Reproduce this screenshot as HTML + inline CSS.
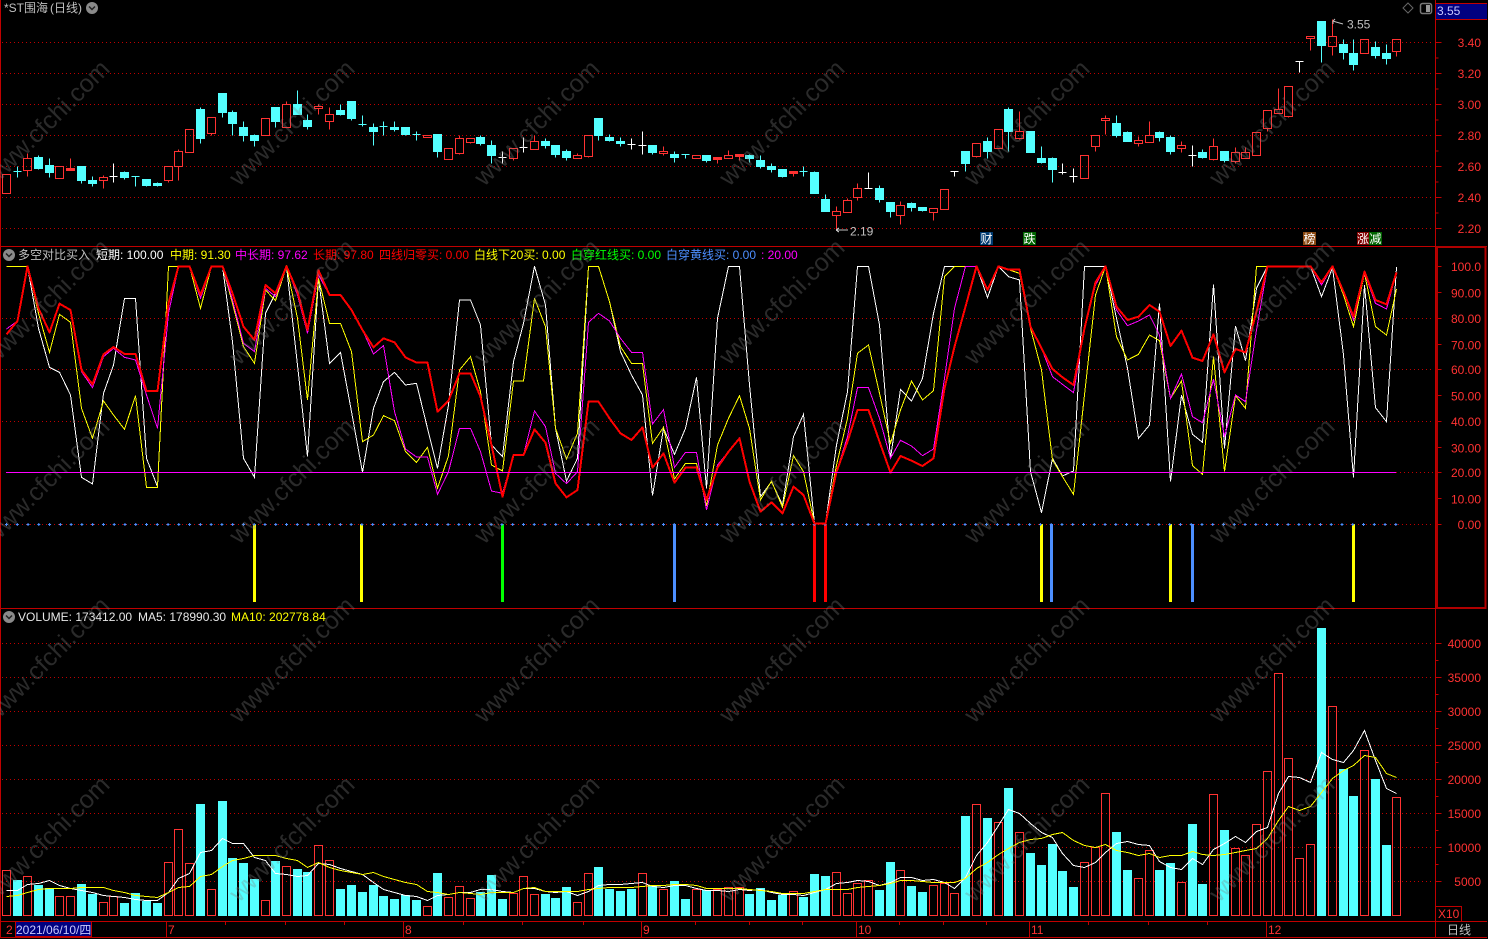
<!DOCTYPE html>
<html><head><meta charset="utf-8"><title>*ST围海</title>
<style>
html,body{margin:0;padding:0;background:#000;width:1488px;height:939px;overflow:hidden}
svg{display:block;position:absolute;left:0;top:0}
text{font-family:"Liberation Sans","Noto Sans CJK SC",sans-serif;font-size:12px;white-space:pre}
.l text{fill:#ff3232;text-anchor:end}
.wm text{font-size:25px;fill:rgba(128,128,128,.33);text-anchor:middle}
</style></head><body>
<svg width="1488" height="939" viewBox="0 0 1488 939" xmlns="http://www.w3.org/2000/svg">
<rect width="1488" height="939" fill="#000"/>

<!-- grid -->
<g stroke="#c00000" stroke-dasharray="1 3" shape-rendering="crispEdges">
<path d="M2 42.5H1434M2 73.5H1434M2 104.5H1434M2 135.5H1434M2 166.5H1434M2 197.5H1434M2 228.5H1434"/>
<path d="M2 318.5H1434M2 369.5H1434M2 421.5H1434M1396 472.5H1434M2 524.5H1434"/>
<path d="M2 643.5H1434M2 677.5H1434M2 711.5H1434M2 745.5H1434M2 779.5H1434M2 813.5H1434M2 847.5H1434M2 881.5H1434"/>
</g>

<!-- candles -->
<g transform="translate(.5 .5)" shape-rendering="crispEdges">
<path fill="#54ffff" stroke="#54ffff" d="M13 171h8M17 166V177M34 157h8v11h-8zM38 155V169M45 165h8v7h-8zM49 158V177M77 166h8v14h-8zM81 180V183M88 180h8v3h-8zM92 176V186M120 172h8v5h-8zM124 171V179M131 176h8M135 176V186M142 179h8v6h-8zM146 185V186M153 183h8v2h-8zM157 182V186M196 109h8v29h-8zM200 107V143M218 93h8v19h-8zM222 112V117M228 112h8v11h-8zM232 110V135M239 127h8v8h-8zM243 121V141M250 135h8v5h-8zM254 134V146M271 107h8v14h-8zM275 121V127M293 104h8v10h-8zM297 90V104M303 120h8v6h-8zM307 114V129M336 110h8v4h-8zM340 104V115M347 101h8v17h-8zM351 118V120M358 124h8M362 115V126M369 127h8v4h-8zM373 123V145M379 126h8M383 121V135M390 127h8v2h-8zM394 121V131M401 127h8v7h-8zM405 134V135M412 134h8M416 131V140M433 134h8v17h-8zM437 151V157M476 137h8v6h-8zM480 135V145M487 145h8v10h-8zM491 140V163M541 141h8v4h-8zM545 138V148M551 145h8v9h-8zM555 154V157M562 151h8v6h-8zM566 149V160M594 118h8v17h-8zM598 135V140M605 137h8v3h-8zM609 134V141M616 141h8v2h-8zM620 137V146M648 145h8v7h-8zM652 152V154M670 154h8v3h-8zM674 151V162M681 154h8M685 154V158M702 155h8v5h-8zM706 160V162M745 155h8v3h-8zM749 154V162M756 160h8v6h-8zM760 155V168M767 166h8v3h-8zM771 163V172M778 169h8v7h-8zM782 176V177M799 171h8M803 166V176M810 172h8v21h-8zM814 171V172M821 199h8v12h-8zM825 194V199M875 188h8v11h-8zM879 185V202M886 202h8v9h-8zM890 211V217M907 203h8v4h-8zM911 202V211M918 207h8v3h-8zM922 210V211M961 151h8v12h-8zM965 163V171M983 141h8v10h-8zM987 137V158M1004 109h8v22h-8zM1008 107V151M1026 131h8v21h-8zM1037 158h8v4h-8zM1041 146V163M1048 158h8v11h-8zM1052 157V182M1112 123h8v12h-8zM1116 115V137M1123 132h8v9h-8zM1127 131V132M1155 132h8v5h-8zM1159 131V141M1166 137h8v14h-8zM1170 135V154M1198 152h8v5h-8zM1202 149V158M1220 151h8v9h-8zM1224 160V162M1317 21h8v24h-8zM1321 45V62M1339 44h8v8h-8zM1343 39V59M1349 53h8v11h-8zM1353 39V70M1371 47h8v8h-8zM1375 41V58M1382 53h8v5h-8zM1386 44V64"/>
<path fill="none" stroke="#ff3232" d="M2 174h8v19h-8zM23 158h8v12h-8zM27 153V158M27 170V176M55 166h8v12h-8zM66 168h8v2h-8zM70 158V168M99 177h8v3h-8zM103 175V177M103 180V188M164 166h8v14h-8zM168 180V182M174 151h8v15h-8zM178 149V151M178 166V180M185 129h8v23h-8zM207 117h8v16h-8zM211 133V135M261 118h8v17h-8zM282 104h8v23h-8zM286 101V104M314 106h8v2h-8zM318 104V106M318 108V114M325 114h8v7h-8zM329 107V114M329 121V129M423 135h8v2h-8zM444 148h8v11h-8zM455 138h8v15h-8zM459 135V138M459 153V154M466 138h8v4h-8zM470 142V143M509 148h8v10h-8zM513 158V160M530 141h8v8h-8zM534 135V141M573 155h8v3h-8zM577 153V155M584 135h8v21h-8zM588 156V157M659 151h8v2h-8zM663 146V151M663 153V155M692 155h8v3h-8zM713 157h8v2h-8zM717 159V163M724 155h8v3h-8zM728 150V155M735 154h8v2h-8zM739 156V160M789 171h8v2h-8zM793 173V176M832 211h8v4h-8zM836 206V211M836 215V230M843 200h8v12h-8zM847 198V200M853 188h8v9h-8zM857 183V188M857 197V200M896 205h8v10h-8zM900 201V205M900 215V224M929 208h8v4h-8zM933 212V220M940 189h8v20h-8zM972 143h8v13h-8zM976 156V157M994 129h8v19h-8zM1015 131h8v7h-8zM1019 111V131M1019 138V139M1080 155h8v23h-8zM1091 135h8v11h-8zM1095 146V151M1101 118h8v2h-8zM1105 115V118M1105 120V134M1134 140h8v3h-8zM1138 136V140M1138 143V146M1145 135h8v7h-8zM1149 121V135M1177 145h8v3h-8zM1181 141V145M1181 148V152M1209 146h8v13h-8zM1213 138V146M1213 159V160M1231 152h8v9h-8zM1235 147V152M1235 161V163M1241 152h8v6h-8zM1245 147V152M1252 132h8v23h-8zM1263 110h8v18h-8zM1267 128V131M1274 109h8v4h-8zM1278 88V109M1284 86h8v30h-8zM1288 116V117M1306 36h8v2h-8zM1310 38V50M1328 36h8v10h-8zM1332 19V36M1332 46V55M1360 39h8v14h-8zM1392 39h8v12h-8zM1396 51V56"/>
<path fill="#ff3232" stroke="#ff3232" d="M66 168h8v2h-8zM713 157h8v2h-8zM789 171h8v2h-8zM735 154h8v2h-8z"/>
<path fill="none" stroke="#fff" d="M109 176h8M113 163V182M498 157h8M502 151V163M519 147h8M523 137V152M627 144h8M631 138V149M638 145h8M642 131V154M864 188h8M868 172V188M950 171h8M954 171V176M1058 172h8M1062 163V174M1069 176h8M1073 168V182M1188 155h8M1192 145V166M1295 61h8M1299 61V72"/>
</g>

<!-- candle annotations -->
<g fill="none" stroke="#c0c0c0">
<path d="M836 230H848M836 230l3-2M836 230l3 2" shape-rendering="crispEdges"/>
<path d="M1333 21l3 1 7 2M1333 21l2-2M1333 21v3"/>
</g>
<text x="850" y="235.500" fill="#c0c0c0">2.19</text>
<text x="1347" y="28.500" fill="#c0c0c0">3.55</text>
<rect x="980" y="232" width="13" height="13" fill="#003a70"/><text x="980.500" y="243" fill="#fff" textLength="12">财</text>
<rect x="1023" y="232" width="13" height="13" fill="#006400"/><text x="1023.500" y="243" fill="#fff">跌</text>
<rect x="1303" y="232" width="13" height="13" fill="#8b4a13"/><text x="1303.500" y="243" fill="#fff">榜</text>
<rect x="1357" y="232" width="12" height="13" fill="#800000"/><text x="1357" y="243" fill="#fff">涨</text>
<rect x="1369" y="232" width="13" height="13" fill="#006400"/><text x="1369.500" y="243" fill="#fff">减</text>

<!-- indicator bars -->
<g stroke-width="3" shape-rendering="crispEdges">
<path stroke="#ffff00" d="M254.500 524V602M361.500 524V602M1041.500 524V602M1170.500 524V602M1353.500 524V602"/>
<path stroke="#00ff00" d="M502.500 524V602"/>
<path stroke="#4d8fff" d="M674.500 524V602M1051.500 524V602M1192.500 524V602"/>
<path stroke="#ff0000" d="M814.500 524V602M825.500 524V602"/>
</g>
<path d="M5 524.500H1398" stroke="#4d8fff" stroke-dasharray="3 7.770" fill="none"/>
<path d="M6 524.500H1398" stroke="#4d8fff" stroke-width="3" stroke-dasharray="1 9.770" fill="none"/>

<!-- indicator lines; y in 3x crop coordinates -->
<g transform="translate(.5 245) scale(1 .33333)" fill="none" shape-rendering="crispEdges">
<polyline vector-effect="non-scaling-stroke" stroke="#fff" points="6,64 17,64 27,64 38,250 49,367 59,382 70,450 81,697 92,717 103,445 113,360 124,160 135,160 146,640 157,725 168,64 178,64 189,64 200,150 211,64 222,64 232,290 243,640 254,697 265,205 275,145 286,64 297,360 307,635 318,100 329,355 340,322 351,500 362,682 373,490 383,410 394,382 405,420 416,415 427,550 437,670 448,480 459,165 470,165 480,240 491,600 502,635 513,350 523,235 534,64 545,180 555,550 566,708 577,640 588,64 598,64 609,170 620,320 631,390 642,450 652,752 663,550 674,628 685,550 696,397 706,730 717,220 728,64 739,64 749,420 760,755 771,710 782,780 793,575 803,508 814,836 825,836 836,600 847,440 857,64 868,64 879,240 890,640 900,433 911,468 922,400 933,205 944,64 954,64 965,64 976,64 987,158 998,64 1008,95 1019,105 1030,680 1041,803 1052,640 1062,693 1073,678 1084,64 1095,64 1105,64 1116,220 1127,370 1138,580 1149,540 1159,175 1170,710 1181,450 1192,568 1202,592 1213,118 1224,610 1235,243 1245,347 1256,130 1267,64 1278,64 1288,64 1299,64 1310,64 1321,155 1332,68 1343,330 1353,698 1364,120 1375,488 1386,530 1396,66"/>
<polyline vector-effect="non-scaling-stroke" stroke="#ffff00" points="6,64 17,64 27,64 38,205 49,322 59,208 70,232 81,490 92,580 103,468 113,510 124,553 135,452 146,727 157,727 168,64 178,64 189,64 200,190 211,64 222,64 232,175 243,305 254,355 265,135 275,167 286,64 297,220 307,465 318,100 329,235 340,235 351,320 362,590 373,570 383,512 394,527 405,620 416,652 427,607 437,730 448,632 459,375 470,335 480,440 491,660 502,678 513,408 523,408 534,160 545,245 555,550 566,642 577,565 588,64 598,64 609,170 620,305 631,355 642,355 652,595 663,547 674,702 685,655 696,655 706,783 717,600 728,520 739,452 749,550 760,765 771,708 782,787 793,632 803,680 814,836 825,836 836,660 847,520 857,325 868,300 879,445 890,595 900,495 911,408 922,465 933,437 944,95 954,64 965,64 976,64 987,135 998,64 1008,74 1019,85 1030,250 1041,375 1052,645 1062,695 1073,748 1084,450 1095,150 1105,64 1116,275 1127,345 1138,328 1149,270 1159,287 1170,460 1181,408 1192,662 1202,688 1213,335 1224,680 1235,452 1245,490 1256,64 1267,64 1278,64 1288,64 1299,64 1310,64 1321,120 1332,64 1343,150 1353,245 1364,85 1375,245 1386,270 1396,132"/>
<polyline vector-effect="non-scaling-stroke" stroke="#ff00ff" points="6,252 17,228 27,64 38,195 49,262 59,176 70,195 81,380 92,428 103,335 113,310 124,337 135,345 146,450 157,550 168,205 178,64 189,64 200,160 211,64 222,64 232,165 243,295 254,320 265,130 275,155 286,64 297,150 307,265 318,90 329,150 340,150 351,195 362,255 373,327 383,302 394,500 405,612 416,636 427,636 437,748 448,680 459,550 470,550 480,620 491,738 502,745 513,630 523,630 534,498 545,545 555,685 566,716 577,680 588,232 598,205 609,228 620,280 631,322 642,322 652,537 663,494 674,667 685,622 696,622 706,795 717,660 728,620 739,580 749,710 760,800 771,772 782,805 793,725 803,750 814,836 825,836 836,680 847,575 857,428 868,428 879,520 890,640 900,586 911,603 922,632 933,612 944,400 954,190 965,64 976,64 987,135 998,64 1008,74 1019,74 1030,245 1041,310 1052,395 1062,418 1073,443 1084,250 1095,120 1105,64 1116,195 1127,242 1138,228 1149,210 1159,270 1170,460 1181,387 1192,515 1202,533 1213,403 1224,575 1235,450 1245,470 1256,255 1267,64 1278,64 1288,64 1299,64 1310,64 1321,120 1332,64 1343,140 1353,225 1364,85 1375,175 1386,192 1396,82"/>
<polyline vector-effect="non-scaling-stroke" stroke="#ff0000" stroke-width="2" stroke-linejoin="round" points="6,268 17,228 27,64 38,190 49,262 59,176 70,195 81,375 92,418 103,328 113,306 124,327 135,327 146,438 157,438 168,175 178,64 189,64 200,150 211,64 222,64 232,145 243,245 254,285 265,120 275,145 286,64 297,140 307,255 318,76 329,150 340,150 351,195 362,255 373,307 383,280 394,292 405,337 416,353 427,353 437,500 448,467 459,385 470,385 480,455 491,600 502,755 513,630 523,630 534,553 545,593 555,715 566,757 577,735 588,470 598,470 609,520 620,565 631,585 642,547 652,668 663,625 674,713 685,668 696,668 706,765 717,668 728,620 739,580 749,710 760,800 771,772 782,805 793,725 803,750 814,836 825,836 836,680 847,590 857,495 868,495 879,590 890,683 900,633 911,647 922,663 933,640 944,430 954,305 965,185 976,64 987,135 998,64 1008,74 1019,74 1030,245 1041,310 1052,372 1062,397 1073,420 1084,250 1095,112 1105,64 1116,185 1127,225 1138,215 1149,180 1159,200 1170,303 1181,257 1192,338 1202,348 1213,268 1224,382 1235,312 1245,322 1256,200 1267,64 1278,64 1288,64 1299,64 1310,64 1321,112 1332,64 1343,140 1353,215 1364,80 1375,165 1386,178 1396,82"/>
</g>
<path d="M6 472.500H1396" stroke="#ff00ff" shape-rendering="crispEdges"/>

<!-- volume bars -->
<g transform="translate(.5 .5)" shape-rendering="crispEdges">
<path fill="#54ffff" stroke="#54ffff" d="M13 880h8V915h-8zM34 885h8V915h-8zM45 888h8V915h-8zM77 884h8V915h-8zM88 894h8V915h-8zM120 903h8V915h-8zM131 893h8V915h-8zM142 901h8V915h-8zM153 903h8V915h-8zM196 804h8V915h-8zM218 801h8V915h-8zM228 858h8V915h-8zM239 863h8V915h-8zM250 879h8V915h-8zM271 861h8V915h-8zM293 869h8V915h-8zM303 872h8V915h-8zM336 889h8V915h-8zM347 885h8V915h-8zM358 892h8V915h-8zM369 885h8V915h-8zM379 896h8V915h-8zM390 899h8V915h-8zM401 895h8V915h-8zM412 900h8V915h-8zM433 873h8V915h-8zM476 892h8V915h-8zM487 875h8V915h-8zM498 899h8V915h-8zM541 894h8V915h-8zM551 898h8V915h-8zM562 887h8V915h-8zM594 867h8V915h-8zM605 889h8V915h-8zM616 891h8V915h-8zM627 889h8V915h-8zM648 886h8V915h-8zM670 881h8V915h-8zM681 899h8V915h-8zM702 890h8V915h-8zM745 894h8V915h-8zM756 888h8V915h-8zM767 900h8V915h-8zM778 895h8V915h-8zM799 897h8V915h-8zM810 874h8V915h-8zM821 876h8V915h-8zM875 890h8V915h-8zM886 862h8V915h-8zM907 886h8V915h-8zM918 892h8V915h-8zM961 816h8V915h-8zM983 818h8V915h-8zM1004 788h8V915h-8zM1026 853h8V915h-8zM1037 865h8V915h-8zM1048 844h8V915h-8zM1058 871h8V915h-8zM1069 887h8V915h-8zM1112 832h8V915h-8zM1123 870h8V915h-8zM1155 870h8V915h-8zM1166 863h8V915h-8zM1188 824h8V915h-8zM1198 884h8V915h-8zM1220 830h8V915h-8zM1317 628h8V915h-8zM1339 769h8V915h-8zM1349 796h8V915h-8zM1371 779h8V915h-8zM1382 845h8V915h-8z"/>
<path fill="none" stroke="#ff3232" d="M2 870h8V915h-8zM23 876h8V915h-8zM55 896h8V915h-8zM66 896h8V915h-8zM99 902h8V915h-8zM109 896h8V915h-8zM164 862h8V915h-8zM174 829h8V915h-8zM185 863h8V915h-8zM207 889h8V915h-8zM261 900h8V915h-8zM282 866h8V915h-8zM314 845h8V915h-8zM325 860h8V915h-8zM423 906h8V915h-8zM444 897h8V915h-8zM455 886h8V915h-8zM466 898h8V915h-8zM509 893h8V915h-8zM519 876h8V915h-8zM530 894h8V915h-8zM573 902h8V915h-8zM584 873h8V915h-8zM638 873h8V915h-8zM659 889h8V915h-8zM692 889h8V915h-8zM713 889h8V915h-8zM724 887h8V915h-8zM735 887h8V915h-8zM789 891h8V915h-8zM832 872h8V915h-8zM843 893h8V915h-8zM853 883h8V915h-8zM864 880h8V915h-8zM896 870h8V915h-8zM929 885h8V915h-8zM940 883h8V915h-8zM950 893h8V915h-8zM972 804h8V915h-8zM994 822h8V915h-8zM1015 832h8V915h-8zM1080 862h8V915h-8zM1091 847h8V915h-8zM1101 793h8V915h-8zM1134 878h8V915h-8zM1145 850h8V915h-8zM1177 882h8V915h-8zM1209 794h8V915h-8zM1231 848h8V915h-8zM1241 855h8V915h-8zM1252 824h8V915h-8zM1263 771h8V915h-8zM1274 673h8V915h-8zM1284 758h8V915h-8zM1295 858h8V915h-8zM1306 844h8V915h-8zM1328 706h8V915h-8zM1360 750h8V915h-8zM1392 797h8V915h-8z"/>
</g>

<!-- volume MA -->
<g transform="translate(.5 .5)" fill="none" shape-rendering="crispEdges">
<polyline stroke="#fff" points="6,890 17,890 27,884 38,883 49,880 59,885 70,888 81,890 92,892 103,895 113,896 124,897 135,899 146,900 157,900 168,892 178,878 189,873 200,852 211,850 222,838 232,843 243,843 254,857 265,860 275,873 286,874 297,876 307,875 318,863 329,864 340,868 351,871 362,874 373,882 383,889 394,892 405,895 416,896 427,900 437,895 448,894 459,892 470,892 480,889 491,889 502,891 513,892 523,888 534,888 545,891 555,892 566,891 577,895 588,891 598,885 609,884 620,884 631,883 642,882 652,886 663,887 674,885 685,885 696,888 706,890 717,890 728,891 739,889 749,890 760,889 771,892 782,894 793,894 803,895 814,892 825,889 836,883 847,882 857,880 868,881 879,885 890,882 900,877 911,877 922,880 933,879 944,882 954,888 965,877 976,855 987,842 998,825 1008,809 1019,813 1030,823 1041,832 1052,837 1062,853 1073,865 1084,867 1095,862 1105,852 1116,843 1127,841 1138,844 1149,845 1159,861 1170,867 1181,869 1192,858 1202,864 1213,849 1224,843 1235,836 1245,842 1256,831 1267,827 1278,793 1288,776 1299,777 1310,782 1321,752 1332,759 1343,762 1353,750 1364,730 1375,760 1386,788 1396,793"/>
<polyline stroke="#ffff00" points="6,896 17,895 27,892 38,889 49,888 59,888 70,888 81,887 92,887 103,887 113,890 124,892 135,895 146,896 157,897 168,892 178,887 189,886 200,876 211,874 222,866 232,860 243,858 254,855 265,855 275,855 286,858 297,860 307,867 318,862 329,867 340,870 351,872 362,874 373,872 383,876 394,879 405,882 416,884 427,891 437,892 448,894 459,892 470,893 480,894 491,892 502,892 513,892 523,888 534,887 545,891 555,891 566,891 577,891 588,889 598,888 609,887 620,887 631,887 642,886 652,885 663,885 674,884 685,884 696,885 706,888 717,888 728,888 739,888 749,889 760,890 771,891 782,893 793,893 803,893 814,891 825,889 836,889 847,889 857,887 868,886 879,885 890,883 900,880 911,880 922,881 933,882 944,882 954,882 965,878 976,868 987,862 998,854 1008,848 1019,842 1030,839 1041,838 1052,834 1062,832 1073,840 1084,845 1095,847 1105,844 1116,850 1127,852 1138,855 1149,853 1159,857 1170,855 1181,855 1192,851 1202,854 1213,855 1224,854 1235,852 1245,850 1256,848 1267,838 1278,820 1288,806 1299,810 1310,806 1321,792 1332,778 1343,770 1353,765 1364,755 1375,757 1386,773 1396,777"/>
</g>

<!-- frame -->
<g fill="none" stroke="#c00000" shape-rendering="crispEdges">
<path d="M.5 0V938M0 246.500H1487M0 608.500H1436M0 921.500H1487M0 937.500H1487M1435.500 0V938"/>
<path d="M1436 3.500H1487M1436 19.500H1487"/>
<path d="M1435.500 42.500h6M1435.500 58h3M1435.500 73.500h6M1435.500 89h3M1435.500 104.500h6M1435.500 120h3M1435.500 135.500h6M1435.500 151h3M1435.500 166.500h6M1435.500 182h3M1435.500 197.500h6M1435.500 213h3M1435.500 228.500h6"/>
<path d="M1435.500 266.500h6M1435.500 292.500h6M1435.500 318.500h6M1435.500 344.500h6M1435.500 369.500h6M1435.500 395.500h6M1435.500 421.500h6M1435.500 447.500h6M1435.500 472.500h6M1435.500 498.500h6M1435.500 524.500h6"/>
<path d="M1435.500 643.500h6M1435.500 660.500h3M1435.500 677.500h6M1435.500 694.500h3M1435.500 711.500h6M1435.500 728.500h3M1435.500 745.500h6M1435.500 762.500h3M1435.500 779.500h6M1435.500 796.500h3M1435.500 813.500h6M1435.500 830.500h3M1435.500 847.500h6M1435.500 864.500h3M1435.500 881.500h6"/>
<path d="M166.500 922V937M403.500 922V937M641.500 922V937M856.500 922V937M1029.500 922V937M1266.500 922V937"/>
<path d="M225.500 922v3M285.500 922v3M344.500 922v3M463.500 922v3M522.500 922v3M583.500 922v3M695.500 922v3M749.500 922v3M802.500 922v3M899.500 922v3M943.500 922v3M986.500 922v3M1088.500 922v3M1148.500 922v3M1207.500 922v3"/>
<rect x="1435.500" y="906.500" width="26" height="15"/>
</g>
<rect x="1437" y="247" width="48.500" height="361" fill="none" stroke="#b00000" stroke-width="2" shape-rendering="crispEdges"/>

<!-- right scale -->
<rect x="1436" y="4" width="51" height="15" fill="#000080"/>
<text x="1437" y="15" fill="#c8c8ff">3.55</text>
<g class="l">
<text x="1481" y="47">3.40</text><text x="1481" y="78">3.20</text><text x="1481" y="109">3.00</text><text x="1481" y="140">2.80</text><text x="1481" y="171">2.60</text><text x="1481" y="202">2.40</text><text x="1481" y="233">2.20</text>
<text x="1481" y="271">100.0</text><text x="1481" y="297.500">90.00</text><text x="1481" y="323">80.00</text><text x="1481" y="349.500">70.00</text><text x="1481" y="374">60.00</text><text x="1481" y="400.500">50.00</text><text x="1481" y="426">40.00</text><text x="1481" y="452.500">30.00</text><text x="1481" y="477">20.00</text><text x="1481" y="503.500">10.00</text><text x="1481" y="529">0.00</text>
<text x="1481" y="648">40000</text><text x="1481" y="682">35000</text><text x="1481" y="716">30000</text><text x="1481" y="750">25000</text><text x="1481" y="784">20000</text><text x="1481" y="818">15000</text><text x="1481" y="852">10000</text><text x="1481" y="886">5000</text>
</g>
<text x="1438" y="918" fill="#ff3232">X10</text>
<text x="1447" y="934" fill="#c0c0c0">日线</text>

<!-- icons top right -->
<path d="M1408 3l5 5-5 5-5-5z" fill="none" stroke="#666"/>
<rect x="1420.500" y="3.500" width="11" height="10" rx="2" fill="none" stroke="#777" stroke-width="1.500"/><rect x="1426" y="5" width="4" height="7" fill="#999"/>

<!-- titles -->
<text x="4" y="12" fill="#c0c0c0">*ST围海</text><text x="50" y="12" fill="#c0c0c0">(日线)</text>
<circle cx="92" cy="8" r="6" fill="#8a8a8a"/><path d="M89 6.500l3 3 3-3" fill="none" stroke="#222" stroke-width="1.500"/>
<circle cx="9" cy="255" r="6" fill="#8a8a8a"/><path d="M6 253.500l3 3 3-3" fill="none" stroke="#222" stroke-width="1.500"/>
<circle cx="9" cy="617" r="6" fill="#8a8a8a"/><path d="M6 615.500l3 3 3-3" fill="none" stroke="#222" stroke-width="1.500"/>

<g>
<text x="18" y="259" fill="#c0c0c0">多空对比买入</text>
<text x="96" y="259" fill="#fff">短期: 100.00</text>
<text x="170" y="259" fill="#ffff00">中期: 91.30</text>
<text x="235" y="259" fill="#ff00ff">中长期: 97.62</text>
<text x="313" y="259" fill="#ff0000">长期: 97.80</text>
<text x="379" y="259" fill="#ff0000">四线归零买: 0.00</text>
<text x="474" y="259" fill="#ffff00">白线下20买: 0.00</text>
<text x="571" y="259" fill="#00ff00">白穿红线买: 0.00</text>
<text x="666" y="259" fill="#4d8fff">白穿黄线买: 0.00</text>
<text x="761" y="259" fill="#ff00ff">: 20.00</text>
<text x="18" y="621" fill="#e8e8e8">VOLUME: 173412.00</text>
<text x="138" y="621" fill="#e8e8e8">MA5: 178990.30</text>
<text x="231" y="621" fill="#ffff00">MA10: 202778.84</text>
</g>

<!-- date axis -->
<rect x="15.500" y="921.500" width="76" height="15" fill="#000080" stroke="#c00000" shape-rendering="crispEdges"/>
<text x="16" y="934" fill="#c8c8ff">2021/06/10/四</text>
<g fill="#ff3232">
<text x="6" y="934">2</text><text x="168" y="934">7</text><text x="405" y="934">8</text><text x="643" y="934">9</text><text x="858" y="934">10</text><text x="1031" y="934">11</text><text x="1268" y="934">12</text>
</g>

<!-- watermark -->
<g class="wm">
<text transform="translate(47 123) rotate(-45)" y="8">www.cfchi.com</text><text transform="translate(292 123) rotate(-45)" y="8">www.cfchi.com</text><text transform="translate(537 123) rotate(-45)" y="8">www.cfchi.com</text><text transform="translate(782 123) rotate(-45)" y="8">www.cfchi.com</text><text transform="translate(1027 123) rotate(-45)" y="8">www.cfchi.com</text><text transform="translate(1272 123) rotate(-45)" y="8">www.cfchi.com</text>
<text transform="translate(47 302) rotate(-45)" y="8">www.cfchi.com</text><text transform="translate(292 302) rotate(-45)" y="8">www.cfchi.com</text><text transform="translate(537 302) rotate(-45)" y="8">www.cfchi.com</text><text transform="translate(782 302) rotate(-45)" y="8">www.cfchi.com</text><text transform="translate(1027 302) rotate(-45)" y="8">www.cfchi.com</text><text transform="translate(1272 302) rotate(-45)" y="8">www.cfchi.com</text>
<text transform="translate(47 481) rotate(-45)" y="8">www.cfchi.com</text><text transform="translate(292 481) rotate(-45)" y="8">www.cfchi.com</text><text transform="translate(537 481) rotate(-45)" y="8">www.cfchi.com</text><text transform="translate(782 481) rotate(-45)" y="8">www.cfchi.com</text><text transform="translate(1027 481) rotate(-45)" y="8">www.cfchi.com</text><text transform="translate(1272 481) rotate(-45)" y="8">www.cfchi.com</text>
<text transform="translate(47 660) rotate(-45)" y="8">www.cfchi.com</text><text transform="translate(292 660) rotate(-45)" y="8">www.cfchi.com</text><text transform="translate(537 660) rotate(-45)" y="8">www.cfchi.com</text><text transform="translate(782 660) rotate(-45)" y="8">www.cfchi.com</text><text transform="translate(1027 660) rotate(-45)" y="8">www.cfchi.com</text><text transform="translate(1272 660) rotate(-45)" y="8">www.cfchi.com</text>
<text transform="translate(47 839) rotate(-45)" y="8">www.cfchi.com</text><text transform="translate(292 839) rotate(-45)" y="8">www.cfchi.com</text><text transform="translate(537 839) rotate(-45)" y="8">www.cfchi.com</text><text transform="translate(782 839) rotate(-45)" y="8">www.cfchi.com</text><text transform="translate(1027 839) rotate(-45)" y="8">www.cfchi.com</text><text transform="translate(1272 839) rotate(-45)" y="8">www.cfchi.com</text>
</g>
</svg>
</body></html>
